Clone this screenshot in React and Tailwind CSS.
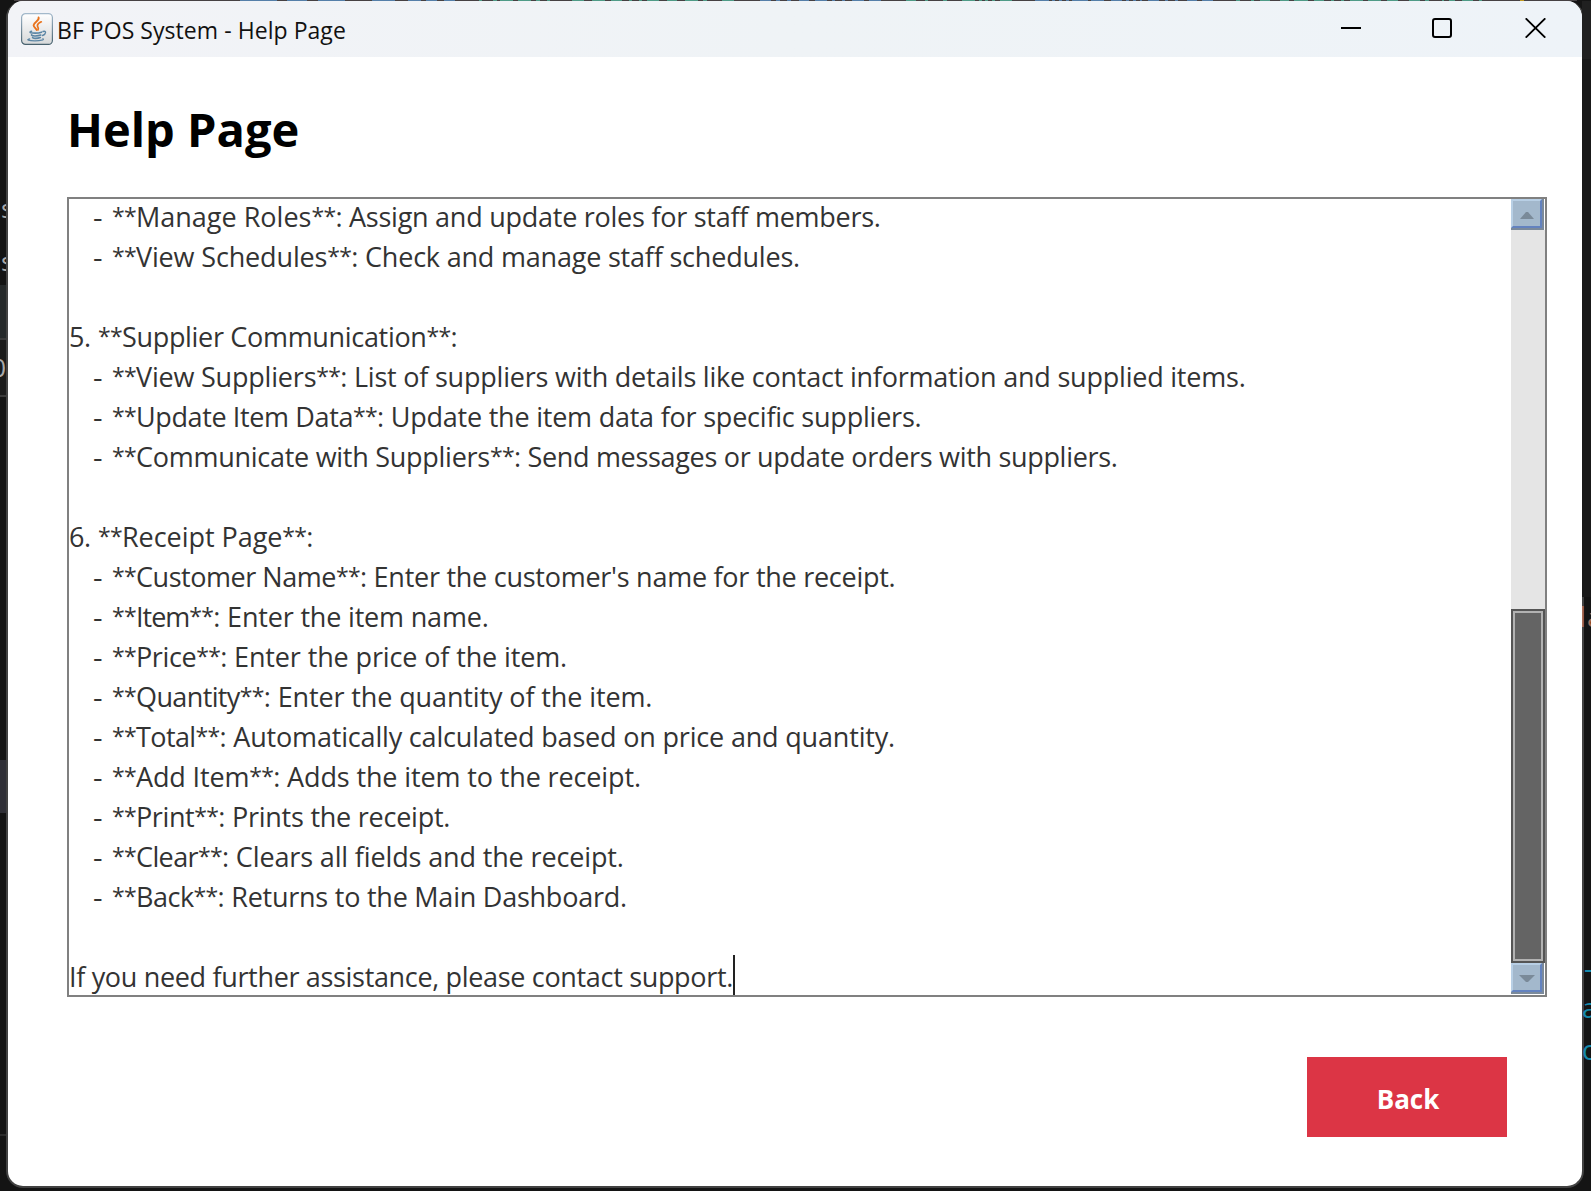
const LINES = [
  null,
  { label: 'Manage Roles', rest: ': Assign and update roles for staff members.', lt: 'tracking-[0px]', rt: 'tracking-[-0.255px]' },
  { label: 'View Schedules', rest: ': Check and manage staff schedules.', lt: 'tracking-[-0.15px]', rt: 'tracking-[-0.2px]' },
  null,
  { num: '5.', label: 'Supplier Communication', rest: ':', lt: 'tracking-[-0.32px]', rt: '' },
  { label: 'View Suppliers', rest: ': List of suppliers with details like contact information and supplied items.', lt: 'tracking-[-0.2px]', rt: 'tracking-[-0.22px]' },
  { label: 'Update Item Data', rest: ': Update the item data for specific suppliers.', lt: 'tracking-[-0.38px]', rt: 'tracking-[-0.22px]' },
  { label: 'Communicate with Suppliers', rest: ': Send messages or update orders with suppliers.', lt: 'tracking-[-0.27px]', rt: 'tracking-[-0.31px]' },
  null,
  { num: '6.', label: 'Receipt Page', rest: ':', lt: 'tracking-[-0.05px]', rt: '' },
  { label: 'Customer Name', rest: ": Enter the customer's name for the receipt.", lt: 'tracking-[-0.46px]', rt: 'tracking-[-0.26px]' },
  { label: 'Item', rest: ': Enter the item name.', lt: 'tracking-[-1px]', rt: 'tracking-[-0.18px]' },
  { label: 'Price', rest: ': Enter the price of the item.', lt: 'tracking-[-0.4px]', rt: 'tracking-[-0.13px]' },
  { label: 'Quantity', rest: ': Enter the quantity of the item.', lt: 'tracking-[-0.62px]', rt: 'tracking-[-0.12px]' },
  { label: 'Total', rest: ': Automatically calculated based on price and quantity.', lt: 'tracking-[-0.6px]', rt: 'tracking-[-0.18px]' },
  { label: 'Add Item', rest: ': Adds the item to the receipt.', lt: 'tracking-[-0.15px]', rt: 'tracking-[-0.13px]' },
  { label: 'Print', rest: ': Prints the receipt.', lt: 'tracking-[-0.4px]', rt: 'tracking-[-0.24px]' },
  { label: 'Clear', rest: ': Clears all fields and the receipt.', lt: 'tracking-[-0.6px]', rt: 'tracking-[-0.14px]' },
  { label: 'Back', rest: ': Returns to the Main Dashboard.', lt: 'tracking-[-0.5px]', rt: 'tracking-[-0.24px]' },
  null,
];

function Stars() {
  return <span className="inline-block w-6 align-[2px] text-[23px] leading-none tracking-[-0.7px]">**</span>;
}

function Line({ line }) {
  if (!line) return <div className="h-10 shrink-0" />;
  return (
    <div className="h-10 shrink-0 whitespace-pre">
      {line.num ? (
        <span className="inline-block w-[29px] tracking-[-0.5px]">{line.num}</span>
      ) : (
        <span className="inline-block w-[43px] pl-6">
          <span className="inline-block origin-left scale-x-110">-</span>
        </span>
      )}
      <Stars />
      <span className={line.lt}>{line.label}</span>
      <Stars />
      <span className={line.rt}>{line.rest}</span>
    </div>
  );
}

function JavaIcon() {
  return (
    <svg width="32" height="32" viewBox="0 0 32 32" fill="none" className="shrink-0">
      <defs>
        <linearGradient id="tile" x1="0" y1="0" x2="0" y2="1">
          <stop offset="0" stopColor="#ffffff" />
          <stop offset="1" stopColor="#d6d8d9" />
        </linearGradient>
        <linearGradient id="rim" x1="0" y1="0" x2="0" y2="1">
          <stop offset="0" stopColor="#a3b9cb" />
          <stop offset="1" stopColor="#48626f" />
        </linearGradient>
      </defs>
      <rect x="0.6" y="0.6" width="30.8" height="30.8" rx="4" fill="url(#tile)" stroke="url(#rim)" strokeWidth="1.2" />
      <g stroke="#e9731c" strokeLinecap="round">
        <path d="M17.600 4.500c1.200 3.300-5.200 4.600-5 7.800.1 1.800 2 2.700 3 4.600" strokeWidth="1.900" />
        <path d="M20.300 8.800c-2 .9-4 2.200-3.900 3.900.1 1.500 1.700 2 .6 4.200" strokeWidth="1.700" />
      </g>
      <g stroke="#5c86a5" strokeWidth="1.600" strokeLinecap="round">
        <path d="M10.500 18.300c-3.500 1.300.2 1.800 3.700 1.800 2.800 0 4.800-.3 6.300-.9" />
        <path d="M10.600 21.800c-.6 1.400 5.800 1.500 9.200.3" />
        <path d="M11.600 24.300c-.4 1.300 4.500 1.500 7.700.3" />
        <path d="M22 18.500c3.500-1.200 3.400 2.400-.4 4" strokeWidth="1.400" />
        <path d="M8.600 25.800c-4 1-.8 2 5.300 2 5.900 0 9.700-.9 8-2" strokeWidth="1.300" />
      </g>
    </svg>
  );
}

function TitleBar() {
  return (
    <header className="flex h-14 shrink-0 items-center bg-gradient-to-r from-[#f2f3f7] via-[#eff3f6] to-[#eef3f8] pl-[13px]">
      <JavaIcon />
      <h2 className="ml-1 pt-0.5 text-[23px] leading-8 tracking-[0.05px] text-[#111]">BF POS System - Help Page</h2>
      <div className="mb-0.5 ml-auto flex items-center gap-[71px] pr-9 text-black">
        <svg width="20" height="20" viewBox="0 0 20 20"><path d="M0 10h20" stroke="currentColor" strokeWidth="2" /></svg>
        <svg width="20" height="20" viewBox="0 0 20 20"><rect x="1" y="1" width="18" height="18" rx="2" fill="none" stroke="currentColor" strokeWidth="2" /></svg>
        <svg width="21" height="20" viewBox="0 0 21 20" className="ml-0.5"><path d="M.7.3l19.600 19.400M20.300.3L.7 19.700" stroke="currentColor" strokeWidth="1.800" /></svg>
      </div>
    </header>
  );
}

function ArrowButton({ up }) {
  return (
    <div className="h-[31px] w-[33px] shrink-0 border-r-2 border-b-2 border-[#7b8a9b]">
      <div className="flex h-[29px] w-[31px] items-center justify-center border-2 border-t-[#b8cfe5] border-r-[#6382bf] border-b-[#6382bf] border-l-[#b8cfe5] bg-[#a3b8cc]">
        <svg width="16" height="8" viewBox="0 0 16 8" className="mt-0.5 ml-px">
          <path d={up ? 'M1 8L7 1h2l6 7z' : 'M0 0h16L9 7H7z'} fill="#7a8a99" />
        </svg>
      </div>
    </div>
  );
}

function ScrollBar() {
  return (
    <div className="flex w-[34px] shrink-0 flex-col bg-[#e5e5e5]">
      <div className="bg-white"><ArrowButton up /></div>
      <div className="h-[379px]" />
      <div className="h-[354px] border-2 border-[#555] bg-[#646464]">
        <div className="h-full border-2 border-[#b2b2b2]" />
      </div>
      <div className="grow bg-white"><ArrowButton /></div>
    </div>
  );
}

const TOP_MARKS = [
  [240, 37, 'blue'], [287, 20, 'blue'], [318, 27, 'blue'], [372, 23, 'blue'], [408, 13, 'blue'], [426, 11, 'blue'], [444, 11, 'blue'],
  [479, 3, 'green'], [493, 4, 'green'], [500, 13, 'green'], [518, 13, 'green'], [536, 4, 'green'], [547, 3, 'green'],
  [572, 12, 'green'], [592, 13, 'green'], [611, 11, 'green'], [629, 3, 'green'], [639, 3, 'green'], [647, 12, 'green'], [667, 10, 'green'],
  [685, 13, 'green'], [703, 4, 'green'], [722, 12, 'green'], [760, 11, 'blue'], [776, 4, 'blue'], [787, 4, 'blue'], [799, 10, 'blue'],
  [815, 12, 'blue'], [832, 3, 'blue'], [842, 3, 'blue'], [852, 12, 'blue'], [869, 12, 'blue'], [906, 10, 'green'], [925, 3, 'green'],
  [943, 4, 'green'], [962, 13, 'green'], [979, 3, 'green'], [985, 3, 'green'], [992, 3, 'green'], [1000, 12, 'green'],
  [1035, 14, 'blue'], [1052, 3, 'blue'], [1059, 3, 'blue'], [1066, 3, 'blue'], [1072, 16, 'blue'], [1091, 13, 'blue'], [1111, 11, 'blue'],
  [1126, 3, 'blue'], [1133, 3, 'blue'], [1140, 2, 'blue'], [1148, 11, 'blue'], [1165, 3, 'blue'], [1175, 3, 'blue'], [1187, 10, 'blue'], [1202, 11, 'blue'],
  [1236, 4, 'green'], [1251, 3, 'green'], [1260, 10, 'green'], [1280, 9, 'green'], [1294, 14, 'green'], [1314, 10, 'green'], [1331, 3, 'green'],
  [1341, 3, 'green'], [1350, 13, 'green'], [1368, 13, 'green'], [1387, 11, 'green'], [1409, 11, 'green'], [1425, 4, 'green'],
  [1442, 2, 'green'], [1449, 6, 'green'], [1462, 11, 'green'], [1479, 3, 'green'], [1520, 4, 'gold'],
];
const MARK_FILL = { blue: '#557fa9', green: '#4f9b87', gold: '#c09820' };

export default function App() {
  return (
    <div className="relative flex h-[1191px] w-[1591px] overflow-hidden bg-[#141414] pt-px font-['Open_Sans','Noto_Sans',sans-serif]">
      <svg width="1591" height="1" className="absolute top-0 left-0">
        <rect x="14" width="1563" height="1" fill="#464143" />
        {TOP_MARKS.map(([x, w, c]) => <rect key={x} x={x} width={w} height="1" fill={MARK_FILL[c]} />)}
      </svg>

      <aside className="flex w-2 shrink-0 flex-col overflow-hidden text-[26px] text-[#aaa]">
        <div className="h-[187px] shrink-0" />
        <div className="h-[53px] shrink-0 pl-px leading-10">s</div>
        <div className="h-[44px] shrink-0 pl-px leading-10">s</div>
        <div className="h-[53px] shrink-0 bg-[#25292a]" />
        <div className="flex h-[59px] shrink-0 items-center justify-end border-y-2 border-[#3a3a3a] bg-[#1b1b1b] pr-0.5">0</div>
        <div className="h-[363px] shrink-0" />
        <div className="h-[53px] shrink-0 bg-[#303037]" />
        <div className="h-[321px] shrink-0" />
        <div className="h-0.5 shrink-0 bg-[#2b2b2b]" />
      </aside>

      <main className="-ml-0.5 flex h-[1187px] w-[1578px] shrink-0 flex-col overflow-hidden rounded-[17px] border-2 border-t-0 border-[#424242] bg-white">
        <TitleBar />
        <h1 className="mt-10 ml-[59px] h-16 text-[47px] leading-[64px] font-bold text-black">Help Page</h1>
        <section className="mt-9 ml-[59px] flex h-[800px] w-[1480px] shrink-0 border-2 border-[#808080]">
          <div className="flex grow flex-col justify-end overflow-hidden text-[27px] leading-[44px] text-[#333]">
            {LINES.map((line, i) => <Line key={i} line={line} />)}
            <div className="flex h-10 shrink-0 tracking-[-0.33px] whitespace-pre">
              If you need further assistance, please contact support.
              <span className="h-10 w-0.5 bg-[#222]" />
            </div>
          </div>
          <ScrollBar />
        </section>
        <button className="mt-[60px] mr-[75px] h-20 w-[200px] shrink-0 self-end bg-[#dc3545] pt-1 pl-0.5 text-[26px] font-bold text-white">Back</button>
      </main>

      <aside className="-ml-0.5 flex w-[9px] shrink-0 flex-col overflow-hidden text-[27px] text-[#1489ac]">
        <div className="h-[58px] shrink-0 bg-[#202020]" />
        <div className="h-[538px] shrink-0 bg-[#191919]" />
        <div className="-ml-[3px] flex h-10 w-6 shrink-0 leading-10 text-[#a56c56]"><span className="w-2">l</span>a</div>
        <div className="h-[311px] shrink-0" />
        <div className="h-10 shrink-0 pl-0.5 leading-10">-</div>
        <div className="h-[42px] shrink-0 leading-10">a</div>
        <div className="h-10 shrink-0 leading-10">c</div>
      </aside>
    </div>
  );
}
